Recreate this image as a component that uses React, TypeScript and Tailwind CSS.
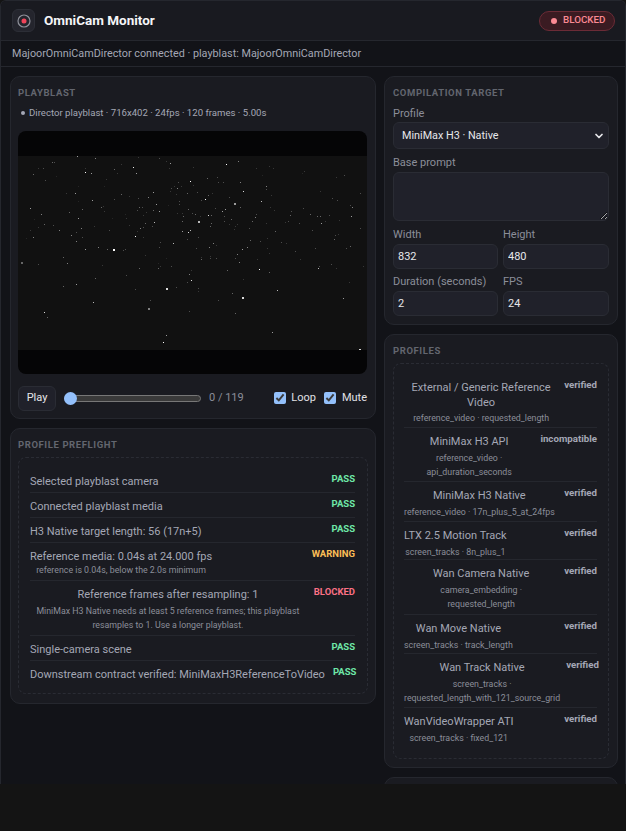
import { ChevronDown } from "lucide-react";

const checks = [
  { label: "Selected playblast camera", status: "PASS" },
  { label: "Connected playblast media", status: "PASS" },
  { label: "H3 Native target length: 56 (17n+5)", status: "PASS" },
  { label: "Reference media: 0.04s at 24.000 fps", note: "reference is 0.04s, below the 2.0s minimum", noteClass: "leading-[13px]", status: "WARNING" },
  {
    label: "Reference frames after resampling: 1",
    note: "MiniMax H3 Native needs at least 5 reference frames; this playblast resamples to 1. Use a longer playblast.",
    noteClass: "mt-[2px] leading-[14px]",
    status: "BLOCKED",
  },
  { label: "Single-camera scene", status: "PASS" },
  { label: "Downstream contract verified: MiniMaxH3ReferenceToVideo", status: "PASS" },
];

const profiles = [
  { name: "External / Generic Reference Video", note: "reference_video · requested_length", status: "verified", row: "h-[54px]", nameClass: "leading-[15px]" },
  { name: "MiniMax H3 API", note: "reference_video · api_duration_seconds", status: "incompatible", row: "h-[54px]" },
  { name: "MiniMax H3 Native", note: "reference_video · 17n_plus_5_at_24fps", status: "verified", row: "h-[40px]" },
  { name: "LTX 2.5 Motion Track", note: "screen_tracks · 8n_plus_1", status: "verified", row: "h-[38px]" },
  { name: "Wan Camera Native", note: "camera_embedding · requested_length", noteClass: "px-[30px]", status: "verified", row: "h-[55px]" },
  { name: "Wan Move Native", note: "screen_tracks · track_length", status: "verified", row: "h-[39px]" },
  { name: "Wan Track Native", note: "screen_tracks · requested_length_with_121_source_grid", status: "verified", row: "h-[54px]" },
  { name: "WanVideoWrapper ATI", note: "screen_tracks · fixed_121", status: "verified", row: "h-[40px]" },
];

// star positions read off the frame: [x, y, brightness, size?], grouped per quadrant
const quadrants: [number, number, number[][]][] = [
  [0, -5, [[178,16,.7],[232,22,.6],[360,20,.3],[424,22,.4],[445,30,.3],[103,34,.5],[109,34,.4],[457,37,.7],[310,40,.3],[347,49,.95],[60,53,.3],[75,52,.4],[203,52,.3],[289,55,.5],[453,52,.3],[202,64,1],[220,67,.7],[355,68,.7],[298,67,.3],[45,70,.5],[115,76,.2],[82,87,.4],[264,85,.3],[517,91,1],[480,94,.4],[469,105,.3],[490,105,.3],[180,106,.2],[259,106,.2],[460,112,.4],[477,112,.6],[457,121,.3],[145,126,.3],[172,127,.7],[406,124,.7],[508,127,.5],[310,130,.5],[475,130,.3],[334,136,.3],[390,138,.6],[361,142,.4],[223,148,.7],[289,145,.4],[483,151,.4],[180,151,.2],[415,160,.7],[485,160,.4],[250,168,.5],[255,167,.3],[373,169,.4],[37,172,.7],[364,170,.5],[450,163,.2],[511,175,.5],[193,176,.5],[358,178,.4],[406,178,.5],[424,181,.7],[155,183,.5],[259,181,.3],[385,184,.3],[70,190,.6],[478,187,.3],[493,187,.3],[522,187,.4],[322,190,.2],[376,193,.3],[496,196,.5],[181,202,.7],[326,202,.3],[49,204,.2],[283,202,.2],[493,211,.5],[409,214,.8],[382,217,.5],[79,220,.5],[106,223,.4],[334,223,.3],[229,226,.3],[403,227,.4],[376,230,.4],[367,232,.6],[190,232,.6],[60,229,.3],[37,238,.3],[124,238,.6],[273,238,.4],[493,241,.7],[517,238,.8],[511,244,.9],[358,241,.3],[175,244,.4],[160,253,.6],[352,256,1],[46,259,.6],[193,259,.4],[25,262,.2],[508,265,.4],[376,259,.3],[175,271,.6],[427,274,.4],[466,277,.8],[241,289,.6],[202,296,.7],[285,295,1,2],[268,295,.5],[322,295,.4],[316,298,.4],[424,289,.4]]],
  [175, -5, [[136,31,.6],[100,40,1],[229,46,.3],[190,53,.3],[241,53,.3],[334,60,.3],[0,49,.3],[328,67,.2],[207,72,.2],[453,74,.4],[430,79,.3],[43,82,.5],[73,79,.4],[76,94,.4],[91,94,.4],[142,94,.6],[220,106,.6],[0,103,.3],[220,115,.4],[382,120,.3],[151,121,.9],[13,125,.4],[58,127,.3],[503,126,.4],[46,133,.5],[235,133,.3],[109,139,.4],[418,142,.4],[37,145,1],[25,148,.4],[433,149,.4],[205,151,.8],[123,158,.7,2],[472,163,.4],[142,169,.5],[67,171,.4],[97,175,.7],[477,169,.6],[232,170,.3],[331,172,.4],[88,181,.7],[295,180,.4],[244,178,.3],[7,190,.5],[46,193,.9],[55,193,.5],[22,196,.3],[94,196,.4],[190,190,.4],[187,199,.6],[292,193,.5],[352,190,.5],[373,196,.5],[382,196,.5],[409,193,.4],[475,196,.7],[115,205,.5],[178,211,.5],[397,210,.3],[439,208,.3],[15,212,.8,2],[55,217,.5],[94,211,.4],[287,212,.4],[277,215,.3],[220,217,.3],[319,217,.4],[385,217,.7],[52,226,.5],[109,220,.3],[127,226,.3],[133,220,.3],[169,232,.4],[502,232,.4],[124,235,.3],[358,238,.4],[247,240,.5],[436,250,.3],[427,253,.4],[15,259,.4],[223,262,.3],[424,265,.5],[172,268,.5],[202,271,.4],[265,274,.4],[280,278,.3],[61,276,.6],[70,284,.3],[49,289,.6],[472,286,.5],[10,292,.4],[163,289,.6],[148,295,.7],[460,292,.4],[367,292,.4],[223,292,.3]]],
  [0, 95, [[136,19,.5],[383,14,.3],[445,23,.2],[10,34,.5,2],[148,37,.6],[61,40,.4],[253,43,.3],[420,37,.2],[426,46,.3],[460,46,.4],[364,52,.5],[421,52,.5],[520,58,.3],[325,72,.4],[514,70,.6],[232,82,.5],[520,88,.9],[508,94,.4],[175,100,.7],[136,106,.5],[352,114,.4],[444,113,.9,2],[474,109,.4],[397,148,.4],[226,154,.8],[390,171,.6,2],[79,184,.9],[514,180,.4],[88,199,.5],[445,253,.7],[436,274,1]]],
  [175, 95, [[133,10,.6],[230,7,.3],[307,1,.4],[52,15,.3],[25,18,.3],[25,26,.5],[52,23,.4],[70,22,.4],[127,22,.4],[193,25,.3],[322,25,.3],[139,34,.6],[415,39,.4],[379,46,.4],[376,52,.8],[429,52,.3],[511,46,.3],[103,58,.5],[199,55,1],[229,64,.5],[151,86,.3],[469,94,.3],[15,112,.4],[16,120,.3],[253,118,.8],[118,127,.5],[147,138,.9,2],[450,142,.7],[75,148,.4],[127,187,.5],[238,244,.7],[500,294,.9,2]]],
];

const stars = quadrants.flatMap(([ox, oy, pts]) =>
  pts.map(([x, y, o, s]) => ({ x: ox + Math.floor(x / 3), y: oy + Math.floor(y / 3), o: Math.pow(o, 1.5), s: s ?? 1 })),
);

const statusColor: Record<string, string> = {
  PASS: "text-[#6ee7a8]",
  WARNING: "text-[#fbbf57]",
  BLOCKED: "text-[#fb7185]",
};

function SectionTitle({ children }: { children: string }) {
  return <h2 className="text-[9.5px] leading-[14px] font-bold tracking-[0.6px] text-[#63666f]">{children}</h2>;
}

function Field({ label, value }: { label: string; value: string }) {
  return (
    <label className="flex min-w-0 flex-col">
      <span className="pt-[2px] text-[11px] leading-[16px] text-[#8b8e99]">{label}</span>
      <input
        readOnly
        value={value}
        className="mt-[1px] h-[25px] w-full rounded-md border border-[#2a2c34] bg-[#20212a] px-[4px] text-[11px] text-[#e6e7ea] outline-none"
      />
    </label>
  );
}

export default function App() {
  return (
    <div className="h-[831px] overflow-hidden bg-[#141414] font-['Roboto',sans-serif]">
      <div className="flex h-[784px] flex-col overflow-hidden rounded-t-[6px] border-x border-t border-[#25272e] bg-[#121318] text-[#a4a7b2]">
        <header className="flex h-[40px] shrink-0 items-center justify-between border-b border-[#25272e] bg-[#191a20] pr-[10px] pl-[11px]">
          <div className="flex items-center gap-[9px]">
            <span className="flex size-[23px] items-center justify-center rounded-md border border-[#2c2e36] bg-[#24252d]">
              <svg viewBox="0 0 14 14" className="size-[14px]">
                <circle cx="7" cy="7" r="6" fill="none" stroke="#8f919a" strokeWidth="1.2" />
                <circle cx="7" cy="7" r="2.5" fill="#f0455a" />
              </svg>
            </span>
            <span className="text-[13.5px] font-bold text-[#f5f5f7]">OmniCam Monitor</span>
          </div>
          <span className="flex h-5 w-[76px] items-center gap-[6px] rounded-full border border-[#6b2b36] bg-[#3a1b22] pl-[11px] text-[9.8px] font-medium text-[#fb8a94]">
            <span className="size-[6px] rounded-full bg-[#fb8a94]" />
            BLOCKED
          </span>
        </header>

        <div className="flex h-[26px] shrink-0 items-center border-b border-[#25272e] pt-[2px] pl-[11px] text-[10.8px] text-[#a4a7b5]">
          MajoorOmniCamDirector connected · playblast: MajoorOmniCamDirector
        </div>

        <main className="grid grid-cols-[366px_234px] items-start gap-2 pt-[9px] pl-[9px]">
          <div className="flex flex-col gap-[9px]">
            <section className="h-[343px] rounded-[10px] border border-[#25272e] bg-[#1a1b21] pt-[9px] pr-2 pl-[7px]">
              <SectionTitle>PLAYBLAST</SectionTitle>
              <p className="mt-[5px] flex items-center gap-[4px] pl-[3px] text-[9.6px] leading-[16px] text-[#a4a7b5]">
                <span className="size-[4px] rounded-full bg-[#a4a7b5]" />
                Director playblast · 716x402 · 24fps · 120 frames · 5.00s
              </p>
              <div className="mt-[10px] flex h-[243px] w-[349px] items-center overflow-hidden rounded-lg bg-[#050506]">
                <svg viewBox="0 0 349 194" className="h-[194px] w-[349px] bg-[#111111]">
                  {stars.map((s, i) => (
                    <rect key={i} x={s.x} y={s.y} width={s.s} height={s.s} fill="#fff" opacity={s.o} />
                  ))}
                </svg>
              </div>
              <div className="mt-[12px] flex items-center">
                <button className="h-[25px] w-[38px] rounded-md border border-[#2a2c34] bg-[#20212a] text-[11px] text-[#e6e7ea]">
                  Play
                </button>
                <span className="relative ml-2 h-[7px] w-[137px] rounded-full border border-[#777] bg-[#3a3a3a]">
                  <span className="absolute top-[-4px] left-[-1px] size-[13px] rounded-full bg-[#93c0fb]" />
                </span>
                <span className="ml-2 text-[11px] text-[#8b8e99]">0 / 119</span>
                <label className="mb-[1px] ml-auto flex items-center gap-[5px] text-[11px] text-[#e0e1e6]">
                  <input type="checkbox" readOnly checked className="size-[12px] accent-[#93c0fb]" />
                  Loop
                </label>
                <label className="mb-[1px] ml-2 flex items-center gap-[6px] text-[11px] text-[#e0e1e6]">
                  <input type="checkbox" readOnly checked className="size-[12px] accent-[#93c0fb]" />
                  Mute
                </label>
              </div>
            </section>

            <section className="h-[276px] rounded-[10px] border border-[#25272e] bg-[#1a1b21] px-[7px] pt-[9px]">
              <SectionTitle>PROFILE PREFLIGHT</SectionTitle>
              <div className="mt-[5px] h-[237px] rounded-lg border border-dashed border-[#2a2c34] pt-[10px] pr-[12px] pl-[11px]">
                {checks.map((c) => (
                  <div key={c.label} className="flex justify-between gap-2 border-b border-[#25272e] pt-[5px] pb-[3px] last:border-b-0">
                    <div className="pt-[1px] text-center">
                      <div className="text-[11px] leading-[15px] whitespace-nowrap text-[#a4a7b5]">{c.label}</div>
                      {c.note && <div className={`text-[8.8px] text-[#8b8e99] ${c.noteClass}`}>{c.note}</div>}
                    </div>
                    <span className={`shrink-0 text-[9.5px] leading-[12px] font-bold ${statusColor[c.status]}`}>{c.status}</span>
                  </div>
                ))}
              </div>
            </section>
          </div>

          <div className="flex flex-col gap-[9px]">
            <section className="h-[249px] rounded-[10px] border border-[#25272e] bg-[#1a1b21] px-2 pt-[9px]">
              <SectionTitle>COMPILATION TARGET</SectionTitle>
              <label className="mt-[4px] flex flex-col">
                <span className="pt-[2px] text-[11px] leading-[16px] text-[#8b8e99]">Profile</span>
                <span className="flex h-[27px] items-center justify-between rounded-md border border-[#2a2c34] bg-[#20212a] pt-[1px] pr-[3px] pl-[8px] text-[10.8px] text-[#e6e7ea]">
                  MiniMax H3 · Native
                  <ChevronDown className="size-[12px]" strokeWidth={3.5} />
                </span>
              </label>
              <label className="mt-[4px] flex flex-col">
                <span className="pt-[2px] text-[11px] leading-[16px] text-[#8b8e99]">Base prompt</span>
                <textarea readOnly className="mt-[1px] h-[49px] rounded-md border border-[#2a2c34] bg-[#20212a] outline-none" />
              </label>
              <div className="mt-[4px] grid grid-cols-[105px_106px] gap-x-[5px] gap-y-[3px]">
                <Field label="Width" value="832" />
                <Field label="Height" value="480" />
                <Field label="Duration (seconds)" value="2" />
                <Field label="FPS" value="24" />
              </div>
            </section>

            <section className="h-[434px] rounded-[10px] border border-[#25272e] bg-[#1a1b21] px-2 pt-[9px]">
              <SectionTitle>PROFILES</SectionTitle>
              <div className="mt-[5px] h-[396px] rounded-lg border border-dashed border-[#2a2c34] pt-[10px] pr-[11px] pl-[10px]">
                {profiles.map((p) => (
                  <div key={p.name} className={`flex justify-between gap-[6px] border-b border-[#25272e] pt-[5px] last:border-b-0 ${p.row}`}>
                    <div className="pt-[1px] text-center">
                      <div className={`text-[11px] text-[#a4a7b5] ${p.nameClass ?? "leading-[16px]"}`}>{p.name}</div>
                      <div className={`mt-[1px] text-[8.8px] leading-[14px] text-[#8b8e99] ${p.noteClass ?? ""}`}>{p.note}</div>
                    </div>
                    <span className="shrink-0 text-[9.7px] leading-[12px] font-bold text-[#a4a7b5]">{p.status}</span>
                  </div>
                ))}
              </div>
            </section>

            <section className="h-10 rounded-[10px] border border-[#25272e] bg-[#1a1b21]" />
          </div>
        </main>
      </div>
    </div>
  );
}
